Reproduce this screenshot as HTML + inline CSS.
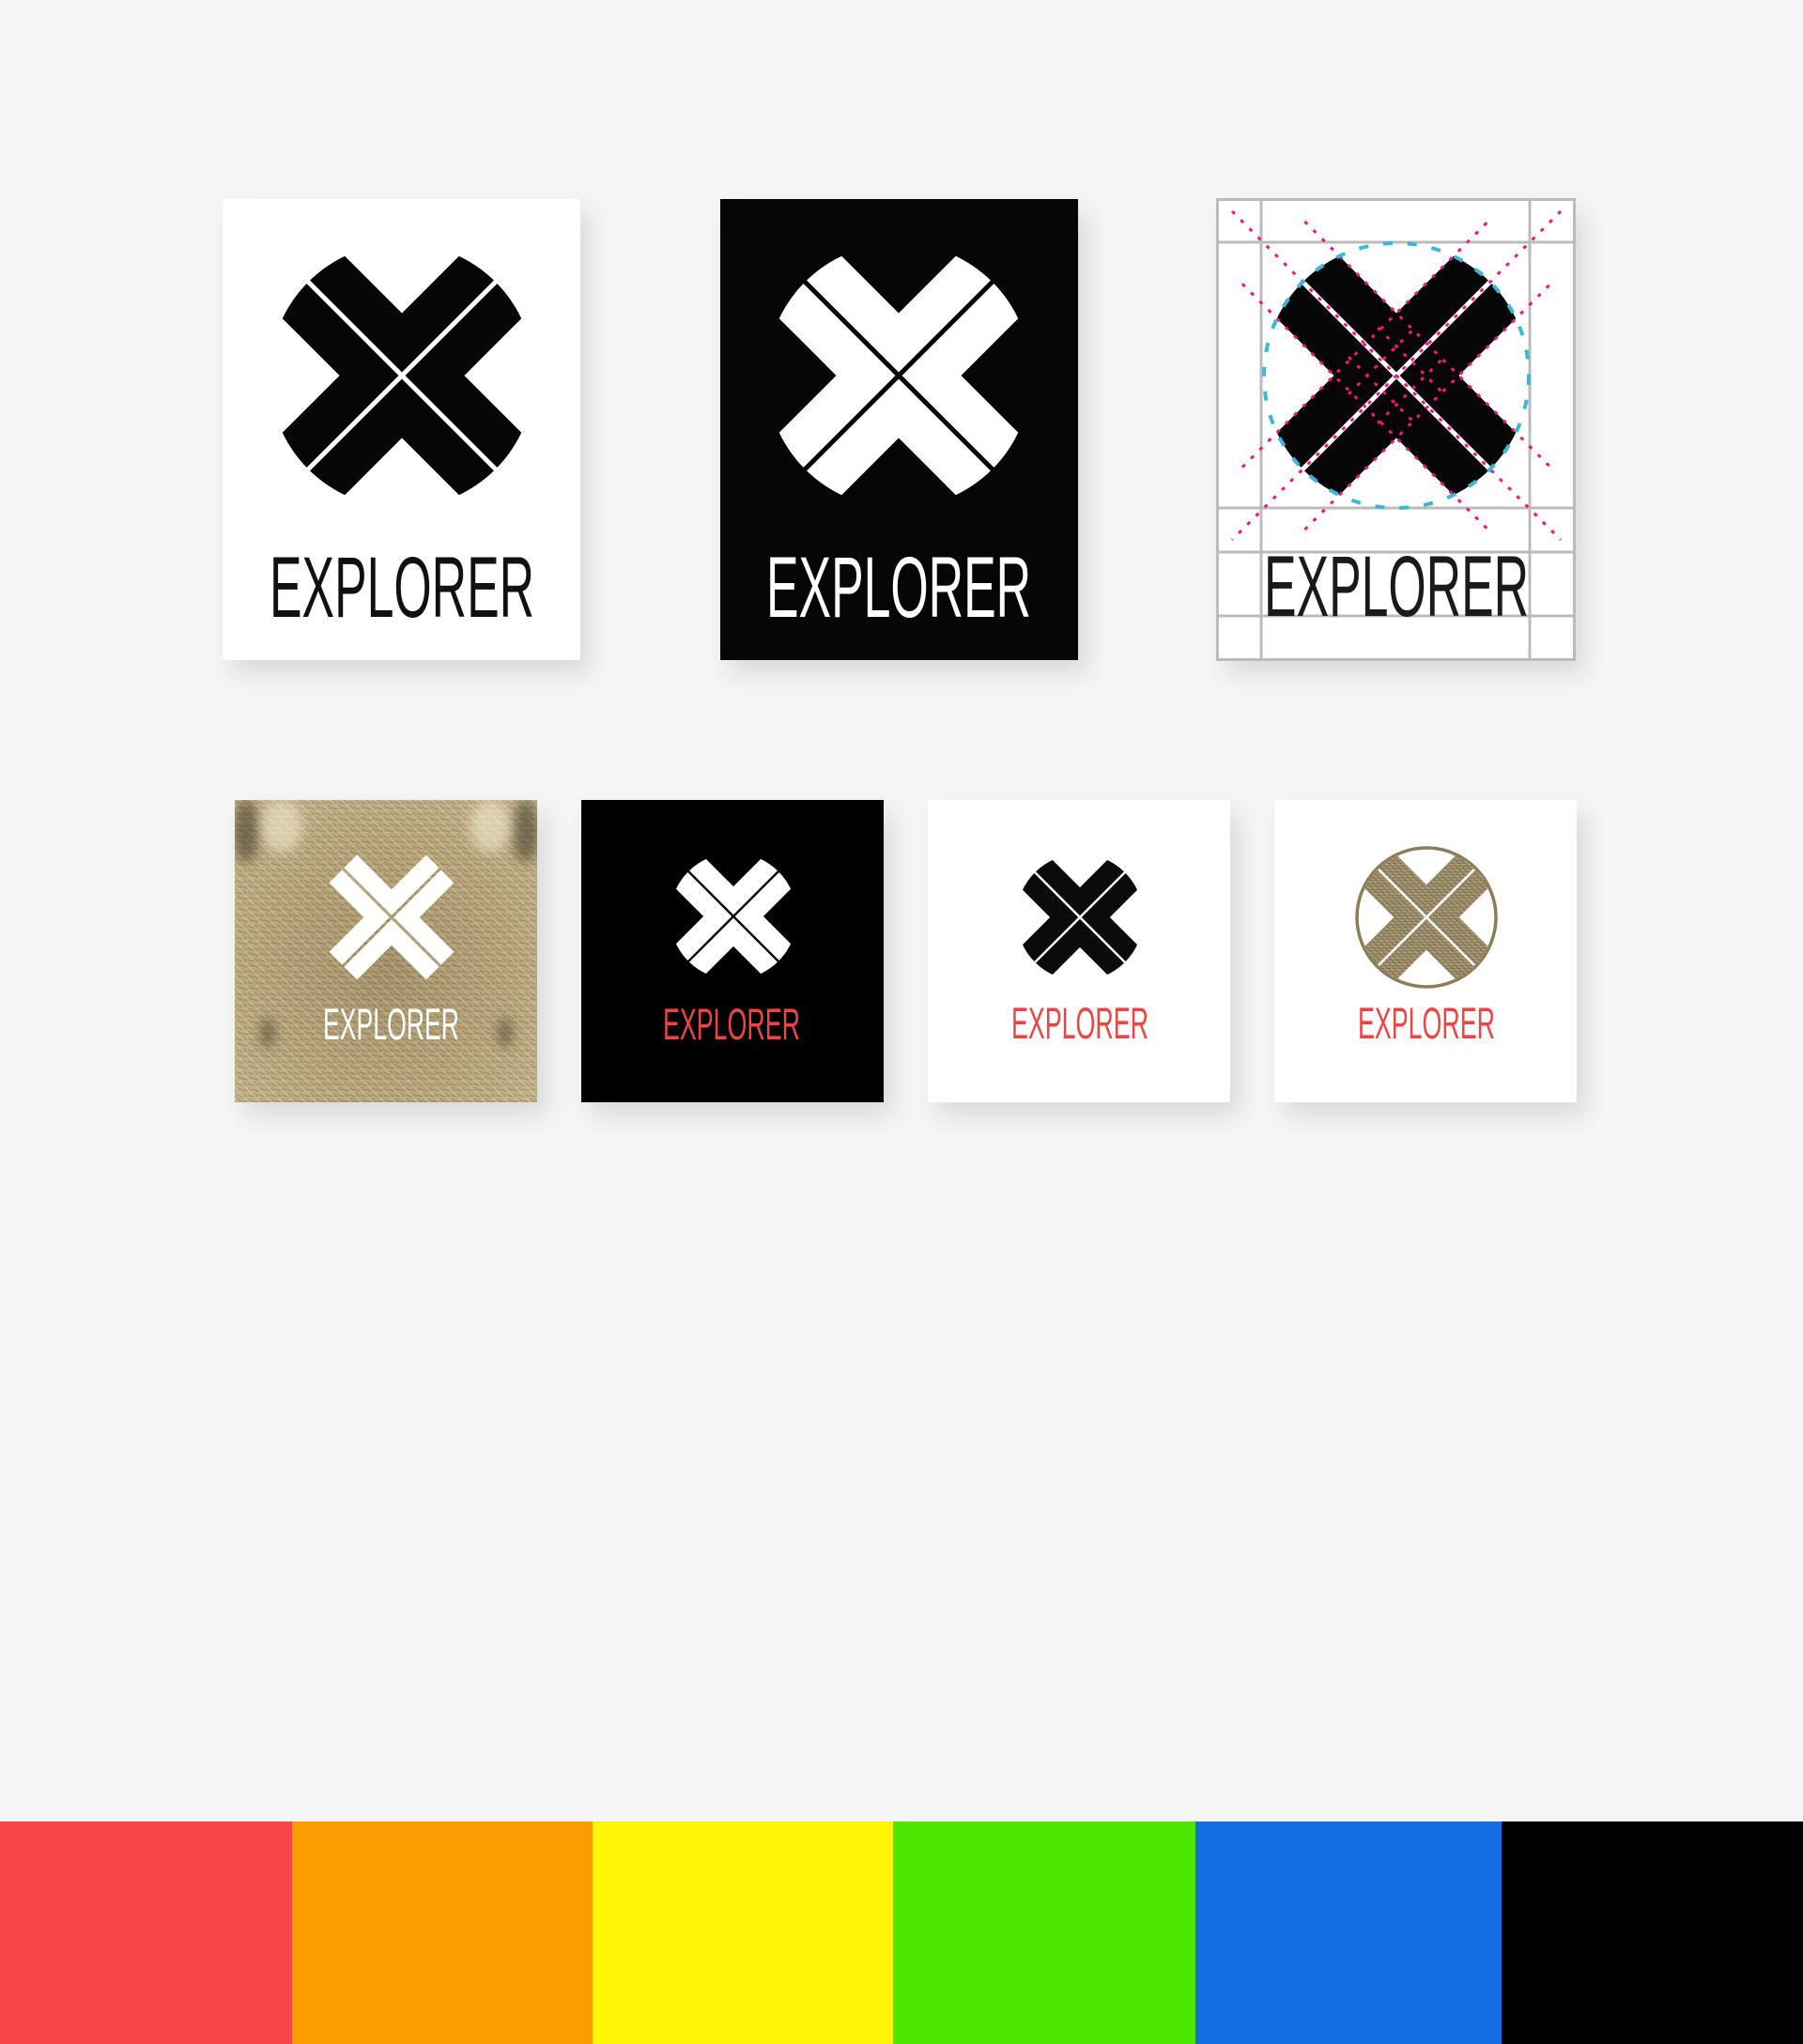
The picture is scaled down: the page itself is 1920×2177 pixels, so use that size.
<!DOCTYPE html>
<html><head><meta charset="utf-8"><style>
html,body{margin:0;padding:0;background:#f5f5f5;}
body{width:1920px;height:2177px;position:relative;overflow:hidden;}
.c{position:absolute;box-shadow:10px 14px 24px rgba(0,0,0,0.11);}
.bar{position:absolute;top:1940px;height:237px;}
svg.o{position:absolute;left:0;top:0;}
</style></head><body>
<div class="c" style="left:237px;top:212px;width:381px;height:491px;background:#fff"></div>
<div class="c" style="left:767px;top:212px;width:381px;height:491px;background:#060606"></div>
<div class="c" style="left:1296px;top:212px;width:381px;height:491px;background:#fff"></div>
<div class="c" style="left:250px;top:852px;width:322px;height:322px;background:#c0aa7c"></div>
<div class="c" style="left:619px;top:852px;width:322px;height:322px;background:#000"></div>
<div class="c" style="left:988px;top:852px;width:322px;height:322px;background:#fff"></div>
<div class="c" style="left:1357px;top:852px;width:322px;height:322px;background:#fff"></div>

<div class="bar" style="left:0;width:311px;background:#f94548"></div>
<div class="bar" style="left:311px;width:320px;background:#fb9d00"></div>
<div class="bar" style="left:631px;width:320px;background:#fcf505"></div>
<div class="bar" style="left:951px;width:322px;background:#4de600"></div>
<div class="bar" style="left:1273px;width:326px;background:#126ee2"></div>
<div class="bar" style="left:1599px;width:321px;background:#000"></div>

<svg class="o" width="1920" height="2177" viewBox="0 0 1920 2177">
<defs>
<clipPath id="cc"><circle cx="0" cy="0" r="141"/></clipPath>
<mask id="m" maskUnits="userSpaceOnUse" x="-200" y="-200" width="400" height="400">
 <g clip-path="url(#cc)" fill="#fff">
  <rect x="-200" y="-47" width="400" height="94" transform="rotate(45)"/>
  <rect x="-200" y="-47" width="400" height="94" transform="rotate(-45)"/>
 </g>
 <g stroke="#000" stroke-width="5"><line x1="-160" y1="-160" x2="160" y2="160"/><line x1="160" y1="-160" x2="-160" y2="160"/></g>
</mask>
<mask id="m2" maskUnits="userSpaceOnUse" x="-200" y="-200" width="400" height="400">
 <g fill="#fff">
  <rect x="-73" y="-21" width="146" height="42" transform="rotate(45)"/>
  <rect x="-73" y="-21" width="146" height="42" transform="rotate(-45)"/>
 </g>
 <g stroke="#000" stroke-width="3"><line x1="-160" y1="-160" x2="160" y2="160"/><line x1="160" y1="-160" x2="-160" y2="160"/></g>
</mask>
<pattern id="fur" patternUnits="userSpaceOnUse" width="12" height="12">
 <rect width="12" height="12" fill="#a59572"/>
 <path d="M0 2l6 2M4 8l7 2M7 1l4 3M1 6l3 4" stroke="#3f3a2c" stroke-width="1.3"/>
 <path d="M2 0l5 3M8 6l4 1M0 10l5 1" stroke="#e2d7b8" stroke-width="1"/>
</pattern>
<radialGradient id="fg" cx="0.5" cy="0.55" r="0.75">
 <stop offset="0" stop-color="#a8946a"/><stop offset="0.55" stop-color="#c2ae82"/><stop offset="1" stop-color="#d6c69a"/>
</radialGradient>
<filter id="bl"><feGaussianBlur stdDeviation="6"/></filter>
<clipPath id="fc"><rect x="250" y="852" width="322" height="322"/></clipPath>
</defs>

<!-- Big card 1 -->
<g transform="translate(428,400)"><rect x="-160" y="-160" width="320" height="320" fill="#060606" mask="url(#m)"/></g>
<text x="287" y="657" textLength="282" lengthAdjust="spacingAndGlyphs" font-family="Liberation Sans Narrow, Liberation Sans, sans-serif" font-size="92" fill="#111">EXPLORER</text>
<!-- Big card 2 -->
<g transform="translate(957,400)"><rect x="-160" y="-160" width="320" height="320" fill="#fff" mask="url(#m)"/></g>
<text x="816" y="657" textLength="282" lengthAdjust="spacingAndGlyphs" font-family="Liberation Sans Narrow, Liberation Sans, sans-serif" font-size="92" fill="#fff">EXPLORER</text>
<!-- Big card 3 -->
<g stroke="#bbb" stroke-width="3" fill="none">
 <rect x="1296.5" y="212.5" width="380" height="490"/>
 <line x1="1343" y1="212" x2="1343" y2="703"/><line x1="1629" y1="212" x2="1629" y2="703"/>
 <line x1="1296" y1="258" x2="1677" y2="258"/><line x1="1296" y1="541" x2="1677" y2="541"/>
 <line x1="1296" y1="588" x2="1677" y2="588"/><line x1="1296" y1="656" x2="1677" y2="656"/>
</g>
<g transform="translate(1487,400)">
 <rect x="-160" y="-160" width="320" height="320" fill="#060606" mask="url(#m)"/>
 <g stroke="#f0157f" stroke-width="3" stroke-dasharray="4 9" fill="none">
  <line x1="-175" y1="-175" x2="175" y2="175"/><line x1="175" y1="-175" x2="-175" y2="175"/>
  <g transform="rotate(45)"><line x1="-185" y1="-47" x2="185" y2="-47"/><line x1="-185" y1="47" x2="185" y2="47"/></g>
  <g transform="rotate(-45)"><line x1="-185" y1="-47" x2="185" y2="-47"/><line x1="-185" y1="47" x2="185" y2="47"/></g>
  <g transform="rotate(45)"><line x1="-50" y1="-22" x2="50" y2="-22"/><line x1="-50" y1="22" x2="50" y2="22"/></g>
  <g transform="rotate(-45)"><line x1="-50" y1="-22" x2="50" y2="-22"/><line x1="-50" y1="22" x2="50" y2="22"/></g>
 </g>
 <circle r="141" fill="none" stroke="#3bb8d6" stroke-width="4" stroke-dasharray="10 16"/>
</g>
<text x="1346" y="656" textLength="282" lengthAdjust="spacingAndGlyphs" font-family="Liberation Sans Narrow, Liberation Sans, sans-serif" font-size="92" fill="#1a1a1a">EXPLORER</text>

<!-- Small card 1 fur -->
<g clip-path="url(#fc)">
 <rect x="250" y="852" width="322" height="322" fill="url(#fg)"/>
 <rect x="250" y="852" width="322" height="322" fill="url(#fur)" opacity="0.3"/>
 <g filter="url(#bl)" fill="#3a3020" opacity="0.55">
  <ellipse cx="262" cy="885" rx="14" ry="34"/>
  <ellipse cx="560" cy="885" rx="14" ry="34"/>
  <ellipse cx="285" cy="1100" rx="7" ry="16"/>
  <ellipse cx="538" cy="1100" rx="7" ry="16"/>
 </g>
 <g filter="url(#bl)" fill="#f3ead0" opacity="0.6">
  <ellipse cx="300" cy="880" rx="22" ry="28"/>
  <ellipse cx="522" cy="880" rx="22" ry="28"/>
 </g>
</g>
<g transform="translate(417,977)"><rect x="-160" y="-160" width="320" height="320" fill="#fff" mask="url(#m2)"/></g>
<text x="344" y="1107" textLength="145" lengthAdjust="spacingAndGlyphs" font-family="Liberation Sans Narrow, Liberation Sans, sans-serif" font-size="47" fill="#fff">EXPLORER</text>
<!-- Small card 2 -->
<g transform="translate(781,976) scale(0.48)"><rect x="-160" y="-160" width="320" height="320" fill="#fff" mask="url(#m)"/></g>
<text x="706" y="1107" textLength="146" lengthAdjust="spacingAndGlyphs" font-family="Liberation Sans Narrow, Liberation Sans, sans-serif" font-size="47" fill="#ee4444">EXPLORER</text>
<!-- Small card 3 -->
<g transform="translate(1150,977) scale(0.48)"><rect x="-160" y="-160" width="320" height="320" fill="#0b0b0b" mask="url(#m)"/></g>
<text x="1077" y="1106" textLength="146" lengthAdjust="spacingAndGlyphs" font-family="Liberation Sans Narrow, Liberation Sans, sans-serif" font-size="47" fill="#ee4444">EXPLORER</text>
<!-- Small card 4 -->
<g transform="translate(1519,977)">
 <circle r="74" fill="none" stroke="#8a7d58" stroke-width="3.5"/>
 <g transform="scale(0.52)"><rect x="-160" y="-160" width="320" height="320" fill="#9a8b64" mask="url(#m)"/><rect x="-160" y="-160" width="320" height="320" fill="url(#fur)" opacity="0.6" mask="url(#m)"/></g>
</g>
<text x="1446" y="1106" textLength="146" lengthAdjust="spacingAndGlyphs" font-family="Liberation Sans Narrow, Liberation Sans, sans-serif" font-size="47" fill="#ee4444">EXPLORER</text>
</svg>
</body></html>
